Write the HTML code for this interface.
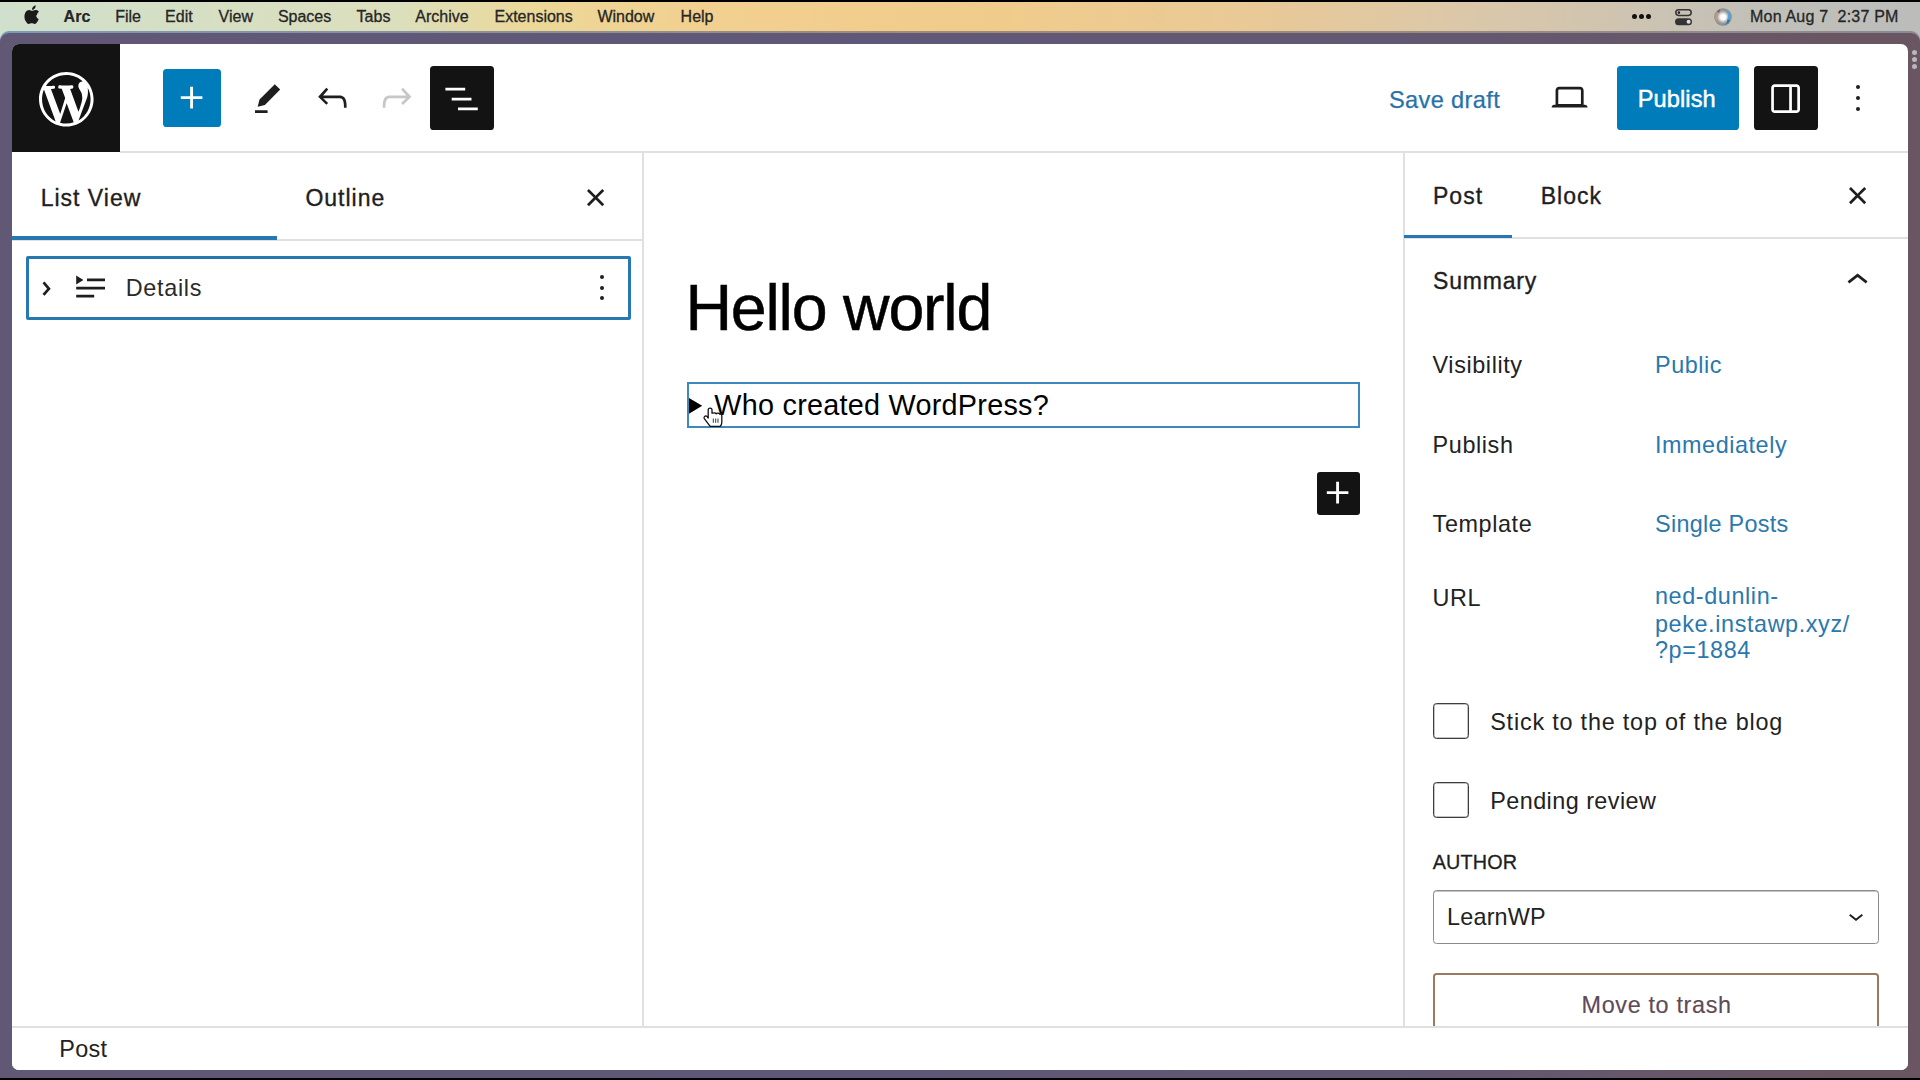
<!DOCTYPE html><html><head><meta charset="utf-8"><title>WordPress editor</title><style>
*{margin:0;padding:0;box-sizing:border-box}
html,body{width:1920px;height:1080px;overflow:hidden;background:#000;font-family:"Liberation Sans",sans-serif}
.t{position:absolute;white-space:nowrap}
.a{position:absolute}
svg{position:absolute;overflow:visible}
</style></head><body>
<div class="a" style="left:0;top:2px;width:1920px;height:42px;background:linear-gradient(90deg,#d0e0cc 0px,#d6dfc4 200px,#dcdfbc 400px,#ecd898 530px,#f2d090 700px,#f0cc8c 1000px,#e9c996 1250px,#dcc8a8 1450px,#cfc4b0 1620px,#c2c0b8 1750px,#bcbdbb 1900px)"></div>
<div class="a" style="left:0;top:31px;width:1920px;height:1046.5px;border-radius:9px 9px 0 0;background:linear-gradient(90deg,#7a9ab8 0px,#8a9098 500px,#a08a78 900px,#9a8a80 1400px,#8a8a98 1920px)"></div>
<div class="a" style="left:0;top:32.5px;width:1920px;height:1045px;border-radius:9px 9px 0 0;background:linear-gradient(90deg,#615876 0px,#5f5878 900px,#645870 1500px,#6a5662 1850px)"></div>
<div class="a" style="left:12px;top:44px;width:1896px;height:1026px;background:#fff;border-radius:7px"></div>
<div class="a" style="left:1911.5px;top:49.5px;width:5px;height:5px;border-radius:50%;background:#b8b8b8"></div>
<div class="a" style="left:1911.5px;top:56.5px;width:5px;height:5px;border-radius:50%;background:#b8b8b8"></div>
<div class="a" style="left:1911.5px;top:63.5px;width:5px;height:5px;border-radius:50%;background:#b8b8b8"></div>
<svg style="left:23.9px;top:5.2px" width="15.8" height="19.2" viewBox="0 0 15 18"><path fill="#1a1a1a" d="M12.3 9.6c0-2.2 1.8-3.2 1.9-3.3-1-1.5-2.6-1.7-3.2-1.7-1.3-.1-2.6.8-3.3.8-.7 0-1.7-.8-2.8-.8C3.4 4.6 2 5.5 1.3 6.9-.2 9.5.3 13.4 1.8 15.6c.7 1.1 1.6 2.3 2.7 2.3 1.1 0 1.5-.7 2.8-.7s1.7.7 2.8.7c1.2 0 1.9-1.1 2.6-2.2.8-1.2 1.2-2.4 1.200-2.500-.1 0-2.4-.9-2.4-3.6zM10.2 3.1C10.8 2.4 11.2 1.4 11.1.4c-.9 0-1.9.6-2.5 1.3-.6.6-1.1 1.6-.9 2.6.9.1 1.9-.5 2.5-1.2z"/></svg>
<div class="t" style="left:63.60px;top:9.05px;font-size:16px;line-height:16px;color:#262626;font-weight:bold;letter-spacing:0px;-webkit-text-stroke:0.2px currentColor;">Arc</div>
<div class="t" style="left:115.20px;top:9.05px;font-size:16px;line-height:16px;color:#262626;font-weight:normal;letter-spacing:0px;-webkit-text-stroke:0.3px currentColor;">File</div>
<div class="t" style="left:165.10px;top:9.05px;font-size:16px;line-height:16px;color:#262626;font-weight:normal;letter-spacing:0px;-webkit-text-stroke:0.3px currentColor;">Edit</div>
<div class="t" style="left:218.60px;top:9.05px;font-size:16px;line-height:16px;color:#262626;font-weight:normal;letter-spacing:0px;-webkit-text-stroke:0.3px currentColor;">View</div>
<div class="t" style="left:277.90px;top:9.05px;font-size:16px;line-height:16px;color:#262626;font-weight:normal;letter-spacing:0px;-webkit-text-stroke:0.3px currentColor;">Spaces</div>
<div class="t" style="left:356.60px;top:9.05px;font-size:16px;line-height:16px;color:#262626;font-weight:normal;letter-spacing:0px;-webkit-text-stroke:0.3px currentColor;">Tabs</div>
<div class="t" style="left:415.30px;top:9.05px;font-size:16px;line-height:16px;color:#262626;font-weight:normal;letter-spacing:0px;-webkit-text-stroke:0.3px currentColor;">Archive</div>
<div class="t" style="left:494.50px;top:9.05px;font-size:16px;line-height:16px;color:#262626;font-weight:normal;letter-spacing:0px;-webkit-text-stroke:0.3px currentColor;">Extensions</div>
<div class="t" style="left:597.40px;top:9.05px;font-size:16px;line-height:16px;color:#262626;font-weight:normal;letter-spacing:0px;-webkit-text-stroke:0.3px currentColor;">Window</div>
<div class="t" style="left:680.60px;top:9.05px;font-size:16px;line-height:16px;color:#262626;font-weight:normal;letter-spacing:0px;-webkit-text-stroke:0.3px currentColor;">Help</div>
<div class="t" style="left:1750.00px;top:8.75px;font-size:16px;line-height:16px;color:#262626;font-weight:normal;letter-spacing:0.2px;-webkit-text-stroke:0.3px currentColor;">Mon Aug 7&nbsp;&nbsp;2:37 PM</div>
<div class="a" style="left:1631.8000000000002px;top:13.6px;width:5.2px;height:5.2px;border-radius:50%;background:#111"></div>
<div class="a" style="left:1639.0px;top:13.6px;width:5.2px;height:5.2px;border-radius:50%;background:#111"></div>
<div class="a" style="left:1646.15px;top:13.6px;width:5.2px;height:5.2px;border-radius:50%;background:#111"></div>
<svg style="left:1675px;top:8.5px" width="17" height="17" viewBox="0 0 17 17"><rect x="0.8" y="0.8" width="15.4" height="5.6" rx="2.8" fill="none" stroke="#333" stroke-width="1.5"/><circle cx="3.9" cy="3.6" r="1.3" fill="#222"/><rect x="0" y="9.2" width="17" height="7" rx="3.5" fill="#333"/><circle cx="13.6" cy="12.7" r="2" fill="#ddd"/></svg>
<svg style="left:1713.5px;top:7.6px" width="18" height="18" viewBox="0 0 18 18"><defs><radialGradient id="sg" cx="0.5" cy="0.5" r="0.5"><stop offset="0" stop-color="#fafafa"/><stop offset="0.35" stop-color="#eeeeee"/><stop offset="0.7" stop-color="#9c9c9c"/><stop offset="1" stop-color="#8a8a8a"/></radialGradient></defs><circle cx="9" cy="9" r="8.8" fill="url(#sg)"/><path d="M10.5 1.2A8 8 0 0 1 9.5 17 a5 6 0 0 0 4-5.5a4.5 7 0 0 0-3-10.3z" fill="#5aa0d4"/><path d="M13.5 11.5a5 6 0 0 1-4 5.5a8 8 0 0 0 6.5-5z" fill="#2a74ac"/><path d="M3.2 3.5A8 8 0 0 0 3.6 15a4 8 0 0 1 1.800-11.500z" fill="#c29a6e"/><path d="M3.2 3.5a8 8 0 0 1 3.5-2.5a4 5 0 0 0-1.5 4z" fill="#6e5472"/><circle cx="9.4" cy="9.2" r="2.8" fill="#fff" opacity="0.95"/></svg>
<div class="a" style="left:12px;top:44px;width:108px;height:108px;background:#131313;border-top-left-radius:7px"></div>
<svg style="left:38.6px;top:71.7px" width="54.6" height="54.6" viewBox="0 0 20 20"><path fill="#fff" d="M20 10c0-5.51-4.49-10-10-10C4.48 0 0 4.49 0 10c0 5.52 4.48 10 10 10 5.51 0 10-4.48 10-10zM7.78 15.37L4.37 6.22c.55-.02 1.17-.08 1.17-.08.5-.06.44-1.130-.06-1.110 0 0-1.45.11-2.370.11-.18 0-.37 0-.58-.01C4.12 2.69 6.87 1.11 10 1.11c2.33 0 4.45.87 6.05 2.34-.68-.11-1.65.39-1.65 1.58 0 .74.45 1.36.9 2.1.35.61.55 1.36.55 2.46 0 1.49-1.4 5-1.4 5l-3.03-8.37c.54-.02.82-.17.82-.17.5-.05.44-1.25-.06-1.22 0 0-1.44.12-2.38.12-.87 0-2.33-.12-2.33-.12-.5-.03-.56 1.2-.06 1.22l.92.08 1.26 3.41zM17.41 10c.24-.64.74-1.87.43-4.25.7 1.29 1.05 2.71 1.05 4.25 0 3.29-1.73 6.24-4.4 7.78.97-2.59 1.94-5.2 2.92-7.78zM6.1 18.09C3.12 16.65 1.11 13.53 1.11 10c0-1.3.23-2.48.72-3.59C3.25 10.3 4.67 14.2 6.1 18.09zm4.03-6.63l2.58 6.98c-.86.29-1.76.45-2.71.45-.79 0-1.57-.11-2.29-.33.81-2.38 1.62-4.74 2.420-7.1z"/></svg>
<div class="a" style="left:120px;top:151px;width:1788px;height:2px;background:#e0e0e0"></div>
<div class="a" style="left:163px;top:69px;width:58px;height:58px;background:#007cba;border-radius:3.6px"></div>
<svg style="left:170.4px;top:76.4px" width="43.2" height="43.2" viewBox="0 0 24 24"><path fill="#fff"  d="M18 11.2h-5.2V6h-1.6v5.2H6v1.6h5.2V18h1.6v-5.2H18z"/></svg>
<svg style="left:246px;top:76.8px" width="43.2" height="43.2" viewBox="0 0 24 24"><path fill="#1e1e1e"  d="m19 7-3-3-8.5 8.5-1 4 4-1L19 7Zm-7 11.5H5V20h7v-1.5Z"/></svg>
<svg style="left:310.8px;top:76.2px" width="43.2" height="43.2" viewBox="0 0 24 24"><path fill="#1e1e1e"  d="M18.3 11.7c-.6-.6-1.4-.9-2.3-.9H6.7l2.9-3.3-1.1-1-4.5 5L8.5 16l1-1-2.7-2.7H16c.5 0 .9.2 1.3.5 1 1 1 3.4 1 4.5v.3h1.5v-.2c0-1.5 0-4.3-1.5-5.7z"/></svg>
<svg style="left:374.7px;top:75.9px" width="43.2" height="43.2" viewBox="0 0 24 24"><path fill="#c7c7c7"  d="M15.6 6.5l-1.1 1 2.9 3.3H8c-.9 0-1.7.3-2.3.9-1.4 1.5-1.4 4.2-1.4 5.8v.2h1.5v-.3c0-1.1 0-3.5 1-4.5.3-.3.7-.5 1.3-.5h9.2L14.5 15l1.1 1.1 4.6-4.6-4.6-5z"/></svg>
<div class="a" style="left:430px;top:66px;width:64px;height:64px;background:#131313;border-radius:3.6px"></div>
<svg style="left:440.4px;top:76.9px" width="43.2" height="43.2" viewBox="0 0 24 24"><path fill="#fff"  d="M3 6h11v1.5H3V6Zm3.5 5.5h11V13h-11v-1.5ZM21 17H10v1.5h11V17Z"/></svg>
<div class="t" style="left:1389.00px;top:88.62px;font-size:23.6px;line-height:23.6px;color:#2772a8;font-weight:normal;letter-spacing:0.35px;-webkit-text-stroke:0.25px currentColor;">Save draft</div>
<svg style="left:1548px;top:76.2px" width="43.2" height="43.2" viewBox="0 0 24 24"><path fill="#1e1e1e"  d="M20.5 16h-.7V8c0-1.1-.9-2-2-2H6.2c-1.1 0-2 .9-2 2v8h-.7c-.8 0-1.5.7-1.5 1.5h20c0-.8-.7-1.5-1.5-1.5zM5.7 8c0-.3.2-.5.5-.5h11.6c.3 0 .5.2.5.5v7.6H5.7V8z"/></svg>
<div class="a" style="left:1617px;top:66px;width:122px;height:64px;background:#007cba;border-radius:3.6px"></div>
<div class="t" style="left:1637.75px;top:88.32px;font-size:23.6px;line-height:23.6px;color:#fff;font-weight:normal;letter-spacing:0.1px;-webkit-text-stroke:0.45px currentColor;">Publish</div>
<div class="a" style="left:1754px;top:66px;width:64px;height:64px;background:#131313;border-radius:3.6px"></div>
<svg style="left:1764.1px;top:76.8px" width="43.2" height="43.2" viewBox="0 0 24 24"><path fill="#fff" fill-rule="evenodd" d="M18 4H6c-1.1 0-2 .9-2 2v12c0 1.1.9 2 2 2h12c1.1 0 2-.9 2-2V6c0-1.1-.9-2-2-2zm-4 14.5H6c-.3 0-.5-.2-.5-.5V6c0-.3.2-.5.5-.5h8v13zm4.5-.5c0 .3-.2.5-.5.5h-2.5v-13H18c.3 0 .5.2.5.5v12z"/></svg>
<div class="a" style="left:1855.5px;top:85.0px;width:4.0px;height:4.0px;border-radius:50%;background:#1e1e1e"></div><div class="a" style="left:1855.5px;top:96.0px;width:4.0px;height:4.0px;border-radius:50%;background:#1e1e1e"></div><div class="a" style="left:1855.5px;top:107.0px;width:4.0px;height:4.0px;border-radius:50%;background:#1e1e1e"></div>
<div class="a" style="left:642px;top:152px;width:1.5px;height:875px;background:#e0e0e0"></div>
<div class="t" style="left:40.70px;top:186.53px;font-size:23.0px;line-height:23.0px;color:#1e1e1e;font-weight:normal;letter-spacing:1.0px;-webkit-text-stroke:0.35px currentColor;">List View</div>
<div class="t" style="left:305.40px;top:186.73px;font-size:23.0px;line-height:23.0px;color:#1e1e1e;font-weight:normal;letter-spacing:1.0px;-webkit-text-stroke:0.35px currentColor;">Outline</div>
<svg style="left:573.7px;top:175.5px" width="43.2" height="43.2" viewBox="0 0 24 24"><path fill="#1e1e1e"  d="M12 13.06l3.712 3.713 1.061-1.06L13.061 12l3.712-3.712-1.06-1.06L12 10.938 8.288 7.227l-1.061 1.06L10.939 12l-3.712 3.712 1.06 1.061L12 13.061z"/></svg>
<div class="a" style="left:12px;top:239px;width:630px;height:1.5px;background:#e0e0e0"></div>
<div class="a" style="left:12px;top:236px;width:265px;height:3.6px;background:#2777b0"></div>
<div class="a" style="left:26px;top:256px;width:605px;height:64px;border:3px solid #2777b0;border-radius:2px"></div>
<svg style="left:25.4px;top:266.5px" width="43.2" height="43.2" viewBox="0 0 24 24"><path fill="#1e1e1e"  d="M10.8622 8.04053L14.2805 12.0286L10.8622 16.0167L9.72327 15.0405L12.3049 12.0286L9.72327 9.01672L10.8622 8.04053Z"/></svg>
<svg style="left:68.8px;top:266px" width="43.2" height="43.2" viewBox="0 0 24 24"><path fill="#1e1e1e" d="M4 16h10v1.5H4V16Zm0-4.5h16V13H4v-1.5ZM10 7h10v1.5H10V7Z"/><path fill="#1e1e1e" d="m4 5.25 4 2.5-4 2.5v-5Z"/></svg>
<div class="t" style="left:125.70px;top:276.69px;font-size:23.4px;line-height:23.4px;color:#2a2a2a;font-weight:normal;letter-spacing:0.7px;">Details</div>
<div class="a" style="left:600.0px;top:274.6px;width:4.0px;height:4.0px;border-radius:50%;background:#1e1e1e"></div><div class="a" style="left:600.0px;top:285.5px;width:4.0px;height:4.0px;border-radius:50%;background:#1e1e1e"></div><div class="a" style="left:600.0px;top:296.3px;width:4.0px;height:4.0px;border-radius:50%;background:#1e1e1e"></div>
<div class="t" style="left:685.50px;top:275.59px;font-size:64.5px;line-height:64.5px;color:#000;font-weight:normal;letter-spacing:-1.22px;-webkit-text-stroke:0.5px #000;">Hello world</div>
<div class="a" style="left:686.5px;top:381.5px;width:673px;height:46px;border:2px solid #3f88bd"></div>
<svg style="left:688.7px;top:397.6px" width="14" height="16" viewBox="0 0 14 16"><path fill="#000" d="M0 0 L13.2 7.85 L0 15.7z"/></svg>
<div class="t" style="left:714.30px;top:391.02px;font-size:28.8px;line-height:28.8px;color:#000;font-weight:normal;letter-spacing:0.25px;">Who created WordPress?</div>
<div class="a" style="left:1316.5px;top:471.5px;width:43px;height:43px;background:#131313;border-radius:3px"></div>
<svg style="left:1316.4px;top:471.4px" width="43.2" height="43.2" viewBox="0 0 24 24"><path fill="#fff"  d="M18 11.2h-5.2V6h-1.6v5.2H6v1.6h5.2V18h1.6v-5.2H18z"/></svg>
<svg style="left:703px;top:407px" width="20" height="21" viewBox="0 0 20 21"><path fill="#fff" stroke="#111" stroke-width="1.3" stroke-linejoin="round" d="M5.2 11 V3 Q5.2 1.1 7.1 1.1 Q9 1.1 9 3 V6.2 Q9.5 5.9 11.2 5.9 Q12.8 5.9 13.1 6.8 Q13.6 6.1 15 6.2 Q16.6 6.3 16.9 7.3 Q17.4 6.9 18 7.1 Q18.8 7.4 18.8 9 V15.5 Q18.8 17.8 17.2 19.3 H7.2 L1.3 11.6 Q0.6 10.4 1.6 9.4 Q2.8 8.4 4.2 9.6 Z"/><path stroke="#222" stroke-width="0.9" d="M10.3 11.5V15.8M12.7 11.5V15.8M15 11.5V15.8"/></svg>
<div class="a" style="left:1403px;top:152px;width:1.5px;height:875px;background:#e0e0e0"></div>
<div class="t" style="left:1433.00px;top:184.53px;font-size:23.0px;line-height:23.0px;color:#1e1e1e;font-weight:normal;letter-spacing:1.0px;-webkit-text-stroke:0.35px currentColor;">Post</div>
<div class="t" style="left:1540.70px;top:184.53px;font-size:23.0px;line-height:23.0px;color:#1e1e1e;font-weight:normal;letter-spacing:1.0px;-webkit-text-stroke:0.35px currentColor;">Block</div>
<svg style="left:1836px;top:174px" width="43.2" height="43.2" viewBox="0 0 24 24"><path fill="#1e1e1e"  d="M12 13.06l3.712 3.713 1.061-1.06L13.061 12l3.712-3.712-1.06-1.06L12 10.938 8.288 7.227l-1.061 1.06L10.939 12l-3.712 3.712 1.06 1.061L12 13.061z"/></svg>
<div class="a" style="left:1404px;top:237px;width:504px;height:1.5px;background:#e0e0e0"></div>
<div class="a" style="left:1404px;top:234.5px;width:108px;height:3.6px;background:#2777b0"></div>
<div class="t" style="left:1433.00px;top:269.93px;font-size:23.0px;line-height:23.0px;color:#1e1e1e;font-weight:normal;letter-spacing:0.8px;-webkit-text-stroke:0.35px currentColor;">Summary</div>
<svg style="left:1836.3px;top:259.2px" width="43.2" height="43.2" viewBox="0 0 24 24"><path fill="#1e1e1e"  d="M6.5 12.4L12 8l5.5 4.4-.9 1.2L12 10l-4.6 3.6-1-1.2z"/></svg>
<div class="t" style="left:1432.60px;top:354.29px;font-size:23.4px;line-height:23.4px;color:#222;font-weight:normal;letter-spacing:0.6px;">Visibility</div>
<div class="t" style="left:1655.00px;top:354.29px;font-size:23.4px;line-height:23.4px;color:#2a78ad;font-weight:normal;letter-spacing:0.55px;">Public</div>
<div class="t" style="left:1432.60px;top:433.69px;font-size:23.4px;line-height:23.4px;color:#222;font-weight:normal;letter-spacing:0.6px;">Publish</div>
<div class="t" style="left:1655.00px;top:433.69px;font-size:23.4px;line-height:23.4px;color:#2a78ad;font-weight:normal;letter-spacing:0.55px;">Immediately</div>
<div class="t" style="left:1432.60px;top:512.89px;font-size:23.4px;line-height:23.4px;color:#222;font-weight:normal;letter-spacing:0.6px;">Template</div>
<div class="t" style="left:1655.00px;top:512.89px;font-size:23.4px;line-height:23.4px;color:#2a78ad;font-weight:normal;letter-spacing:0.3px;">Single Posts</div>
<div class="t" style="left:1432.60px;top:586.69px;font-size:23.4px;line-height:23.4px;color:#222;font-weight:normal;letter-spacing:0.6px;">URL</div>
<div class="t" style="left:1655.00px;top:585.19px;font-size:23.4px;line-height:23.4px;color:#2a78ad;font-weight:normal;letter-spacing:0.6px;">ned-dunlin-</div>
<div class="t" style="left:1655.00px;top:612.69px;font-size:23.4px;line-height:23.4px;color:#2a78ad;font-weight:normal;letter-spacing:0.6px;">peke.instawp.xyz/</div>
<div class="t" style="left:1655.00px;top:639.19px;font-size:23.4px;line-height:23.4px;color:#2a78ad;font-weight:normal;letter-spacing:0.6px;">?p=1884</div>
<div class="a" style="left:1433px;top:703.3px;width:36px;height:36px;border:1px solid #3e3e3e;box-shadow:inset 0 0 0 0.5px #8a8a8a;border-radius:3.5px"></div>
<div class="t" style="left:1490.20px;top:710.99px;font-size:23.4px;line-height:23.4px;color:#222;font-weight:normal;letter-spacing:0.8px;">Stick to the top of the blog</div>
<div class="a" style="left:1433px;top:782.4px;width:36px;height:36px;border:1px solid #3e3e3e;box-shadow:inset 0 0 0 0.5px #8a8a8a;border-radius:3.5px"></div>
<div class="t" style="left:1490.20px;top:789.99px;font-size:23.4px;line-height:23.4px;color:#222;font-weight:normal;letter-spacing:0.45px;">Pending review</div>
<div class="t" style="left:1432.75px;top:853.04px;font-size:19.8px;line-height:19.8px;color:#1e1e1e;font-weight:normal;letter-spacing:0.15px;-webkit-text-stroke:0.3px currentColor;">AUTHOR</div>
<div class="a" style="left:1433px;top:889.5px;width:446px;height:54px;border:1px solid #8a8a8a;box-shadow:inset 0 0.8px 0 #b4b4b4;border-radius:3.6px"></div>
<div class="t" style="left:1447.00px;top:906.19px;font-size:23.4px;line-height:23.4px;color:#222;font-weight:normal;letter-spacing:0.2px;">LearnWP</div>
<svg style="left:1840.6px;top:900.75px" width="30" height="30" viewBox="0 0 24 24"><path fill="#1e1e1e" d="M17.5 11.6L12 16l-5.5-4.4.9-1.2L12 14l4.6-3.6 1 1.2z"/></svg>
<div class="a" style="left:1433px;top:972.5px;width:446px;height:64px;border:2px solid #9c7a60;border-radius:3.6px"></div>
<div class="t" style="left:1581.50px;top:994.19px;font-size:23.4px;line-height:23.4px;color:#604a58;font-weight:normal;letter-spacing:0.65px;-webkit-text-stroke:0.15px currentColor;">Move to trash</div>
<div class="a" style="left:12px;top:1026px;width:1896px;height:44px;background:#fff;border-top:2px solid #e0e0e0;border-bottom-left-radius:7px;border-bottom-right-radius:7px"></div>
<div class="t" style="left:59.30px;top:1037.99px;font-size:23.4px;line-height:23.4px;color:#222;font-weight:normal;letter-spacing:0.3px;">Post</div>
</body></html>
